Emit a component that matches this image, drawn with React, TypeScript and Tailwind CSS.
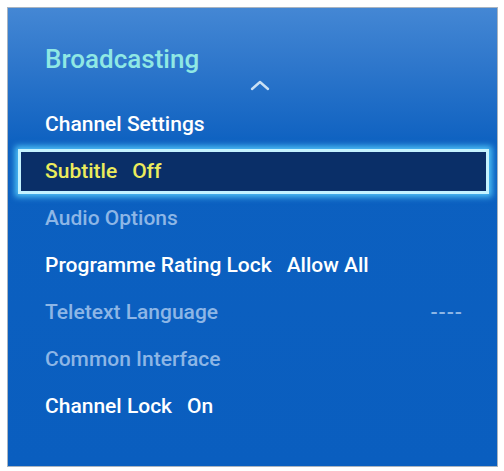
const rows = [
  { label: 'Channel Settings', tone: 'on' },
  { label: 'Subtitle', value: 'Off', tone: 'selected' },
  { label: 'Audio Options', tone: 'off' },
  { label: 'Programme Rating Lock', value: 'Allow All', tone: 'on' },
  { label: 'Teletext Language', right: '----', tone: 'off' },
  { label: 'Common Interface', tone: 'off' },
  { label: 'Channel Lock', value: 'On', tone: 'on' },
]

export default function App() {
  return (
    <div className="h-[471px] w-[504px] bg-white pl-[7px] pt-[7px] font-['Roboto','Liberation_Sans',Arial,sans-serif]">
      <div className="flex h-[460px] w-[491px] flex-col border border-[#a9b4c0] bg-[linear-gradient(to_bottom,#4487d4_0px,#2d76cb_60px,#0c60c0_140px,#0a5ebf_100%)]">
        {/* Title */}
        <div className="pl-[37px] pt-[38px] text-[26px] leading-none font-medium text-[#8fe8e4]">Broadcasting</div>

        {/* Scroll-up arrow */}
        <div className="flex h-[29px] justify-center pl-[14px] pt-[7px]">
          <svg width="22" height="12" viewBox="0 0 22 12">
            <polyline points="3,10 11,3 19,10" fill="none" stroke="#c9e0f4" strokeWidth="2.4" strokeLinecap="round" strokeLinejoin="round" />
          </svg>
        </div>

        {/* Menu items */}
        <div className="flex flex-col pl-[10px] pr-[8px]">
          {rows.map(r => (
            <div key={r.label} className="flex h-[47px] items-center">
              <div
                className={
                  r.tone === 'selected'
                    ? 'flex h-[45px] w-full items-center border-[3px] border-[#c4f3ff] bg-[#0a2f68] pl-[24px] text-[#ecec5c] shadow-[0_0_6px_3px_rgba(90,210,255,0.85)]'
                    : r.tone === 'off'
                      ? 'flex h-[45px] w-full items-center pl-[27px] text-[#8db6e6]'
                      : 'flex h-[45px] w-full items-center pl-[27px] text-white'
                }
              >
                <span className="text-[21px] font-medium leading-none">{r.label}</span>
                {r.value && <span className="ml-[15px] text-[21px] font-medium leading-none">{r.value}</span>}
                {r.right && (
                  <span className="ml-auto mr-[26px] text-[21px] font-medium leading-none tracking-[1px]">{r.right}</span>
                )}
              </div>
            </div>
          ))}
        </div>
      </div>
    </div>
  )
}
